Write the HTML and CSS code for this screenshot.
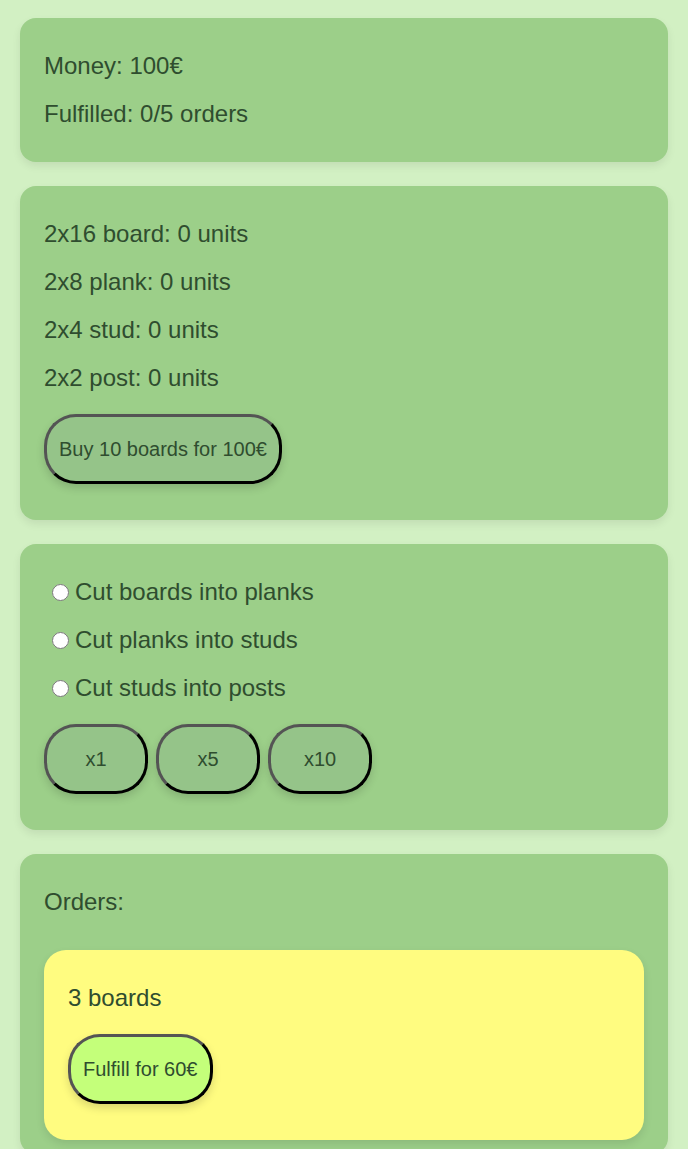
FILE: index.html
```html
<!DOCTYPE html>
<html>
<head>
    <link rel="stylesheet" href="styles.css">
</head>
<body>
    <div class="panel">
        <p>Money: <span id="money">100</span>€</p>
        <p>Fulfilled: <span id="fulfilled">0</span>/5 orders</p>
    </div>
    <div class="panel">
        <p>2x16 board: 0 units</p>
        <p>2x8 plank: 0 units</p>
        <p>2x4 stud: 0 units</p>
        <p>2x2 post: 0 units</p>
        <div class="buttons">
            <button>Buy 10 boards for 100€</button>
        </div>
    </div>
    <div class="panel">
        <p><label><input type="radio" name="cut" value="boards">Cut boards into planks</label></p>
        <p><label><input type="radio" name="cut" value="planks">Cut planks into studs</label></p>
        <p><label><input type="radio" name="cut" value="studs">Cut studs into posts</label></p>
        <div class="buttons">
            <button class="amount">x1</button>
            <button class="amount">x5</button>
            <button class="amount">x10</button>
        </div>
    </div>
    <div class="panel">
        <p>Orders:</p>
        <div class="order">
            <p>3 boards</p>
            <div class="buttons">
                <button class="fulfill">Fulfill for 60€</button>
            </div>
        </div>
    </div>
</body>
</html>
```
FILE: styles.css
```css
body {
    margin: 0;
    padding: 18px 20px;
    background-color: #d2f0c3;
    font-family: "Liberation Sans", Arial, sans-serif;
    font-size: 24px;
    line-height: 28px;
    color: #2f4d2f;
}
.panel {
    background-color: #9ccf89;
    border-radius: 16px;
    padding: 14px 24px;
    margin-bottom: 24px;
    box-shadow: 0 4px 8px rgba(0, 0, 0, 0.08);
}
p {
    margin: 20px 0;
}
label {
    display: flex;
    align-items: center;
}
/* bigger radio buttons */
input[type="radio"] {
    width: 17px;
    height: 17px;
    margin: 0 6px 0 8px;
}
.buttons {
    display: flex;
    gap: 8px;
    margin: 22px 0;
}
button {
    font-family: inherit;
    font-size: 20px;
    line-height: 24px;
    color: #2f4d2f;
    background-color: #95c489;
    padding: 20px 12px;
    border: 3px solid;
    border-color: #545454 #000 #000 #545454;
    border-radius: 32px;
    box-shadow: 0 4px 8px rgba(0, 0, 0, 0.15);
}
.amount {
    width: 104px;
}
.order {
    background-color: #fffc80;
    border-radius: 22px;
    padding: 14px 24px;
    margin-top: 34px;
    box-shadow: 0 4px 8px rgba(0, 0, 0, 0.1);
}
.fulfill {
    background-color: #c4ff7a;
}
```
